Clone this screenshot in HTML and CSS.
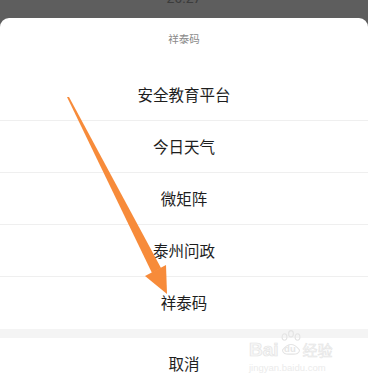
FILE: index.html
```html
<!DOCTYPE html>
<html lang="zh">
<head>
<meta charset="utf-8">
<link rel="stylesheet" href="styles.css">
</head>
<body>
<div class="screen">
  <div class="status"><span class="time">20:27</span></div>
  <div class="sheet">
    <div class="title">祥泰码</div>
    <div class="row">安全教育平台</div>
    <div class="row">今日天气</div>
    <div class="row">微矩阵</div>
    <div class="row">泰州问政</div>
    <div class="row last">祥泰码</div>
    <div class="gap"></div>
    <div class="row cancel">取消</div>
  </div>
  <svg class="arrow" width="368" height="383" viewBox="0 0 368 383">
    <polygon points="67,97 69,97 161,268 152,273" fill="#f78b3a"/>
    <polygon points="145,276 166,265 167,294" fill="#f78b3a"/>
  </svg>
  <div class="watermark">
    <div class="wm-top">
      <span class="wm-bai">Bai</span>
      <span class="wm-paw">
        <svg width="22" height="26" viewBox="0 0 22 26">
          <g fill="none" stroke="#e4e4e4" stroke-width="1.1">
            <ellipse cx="4.5" cy="7" rx="2.4" ry="3.2"/>
            <ellipse cx="11" cy="3.8" rx="2.4" ry="3.2"/>
            <ellipse cx="17.5" cy="7" rx="2.4" ry="3.2"/>
            <path d="M2.5 20 Q11 9 19.5 20 Q19.5 25 11 24 Q2.5 25 2.5 20 Z"/>
          </g>
        </svg>
        <span class="wm-du">du</span>
      </span>
      <span class="wm-jy">经验</span>
    </div>
    <div class="wm-url">jingyan.baidu.com</div>
  </div>
</div>
</body>
</html>
```

FILE: styles.css
```css
html, body {
  margin: 0;
  padding: 0;
}
body {
  width: 368px;
  height: 383px;
  overflow: hidden;
  background: #5e5e5e;
  font-family: "Noto Sans CJK SC", "Noto Sans", sans-serif;
}
.screen {
  position: relative;
  width: 368px;
  height: 383px;
  overflow: hidden;
}
.status {
  height: 18px;
  background: #5e5e5e;
  text-align: center;
  overflow: hidden;
}
.time {
  display: block;
  font-family: "Roboto", sans-serif;
  font-size: 14px;
  line-height: 14px;
  margin-top: -9px;
  color: #3c3c3c;
}
.sheet {
  background: #ffffff;
  border-radius: 9px 9px 0 0;
}
.title {
  height: 51px;
  box-sizing: border-box;
  padding-top: 14px;
  font-size: 10.5px;
  line-height: 14px;
  color: #8a8a8a;
  text-align: center;
}
.row {
  height: 52px;
  box-sizing: border-box;
  padding-bottom: 2px;
  border-bottom: 1px solid #efefef;
  display: flex;
  align-items: center;
  justify-content: center;
  font-size: 15.5px;
  color: #1e1e1e;
}
.row.last {
  border-bottom: none;
  height: 52px;
}
.gap {
  height: 9px;
  background: #f4f4f4;
}
.row.cancel {
  border-bottom: none;
  height: 52px;
  padding-bottom: 2px;
}
.arrow {
  position: absolute;
  left: 0;
  top: 0;
}
.watermark {
  position: absolute;
  left: 249px;
  top: 338px;
  width: 96px;
  color: #efefef;
  font-family: "Liberation Sans", sans-serif;
}
.wm-top {
  display: flex;
  align-items: flex-end;
  height: 21px;
}
.wm-bai {
  font-size: 19px;
  font-weight: bold;
  line-height: 19px;
  color: #f7f7f7;
  -webkit-text-stroke: 0.7px #e4e4e4;
}
.wm-paw {
  position: relative;
  width: 22px;
  height: 24px;
  margin: 0 1px;
}
.wm-paw svg {
  position: absolute;
  left: 0;
  top: -5px;
}
.wm-du {
  position: absolute;
  left: 4.5px;
  top: 8px;
  font-size: 9.5px;
  font-weight: bold;
  color: #e6e6e6;
}
.wm-jy {
  font-family: "Noto Sans CJK SC", sans-serif;
  font-size: 15px;
  line-height: 18px;
  color: #f6f6f6;
  -webkit-text-stroke: 0.5px #e4e4e4;
}
.wm-url {
  font-size: 9.5px;
  line-height: 12px;
  margin-top: 3px;
  color: #ebebeb;
}
```
